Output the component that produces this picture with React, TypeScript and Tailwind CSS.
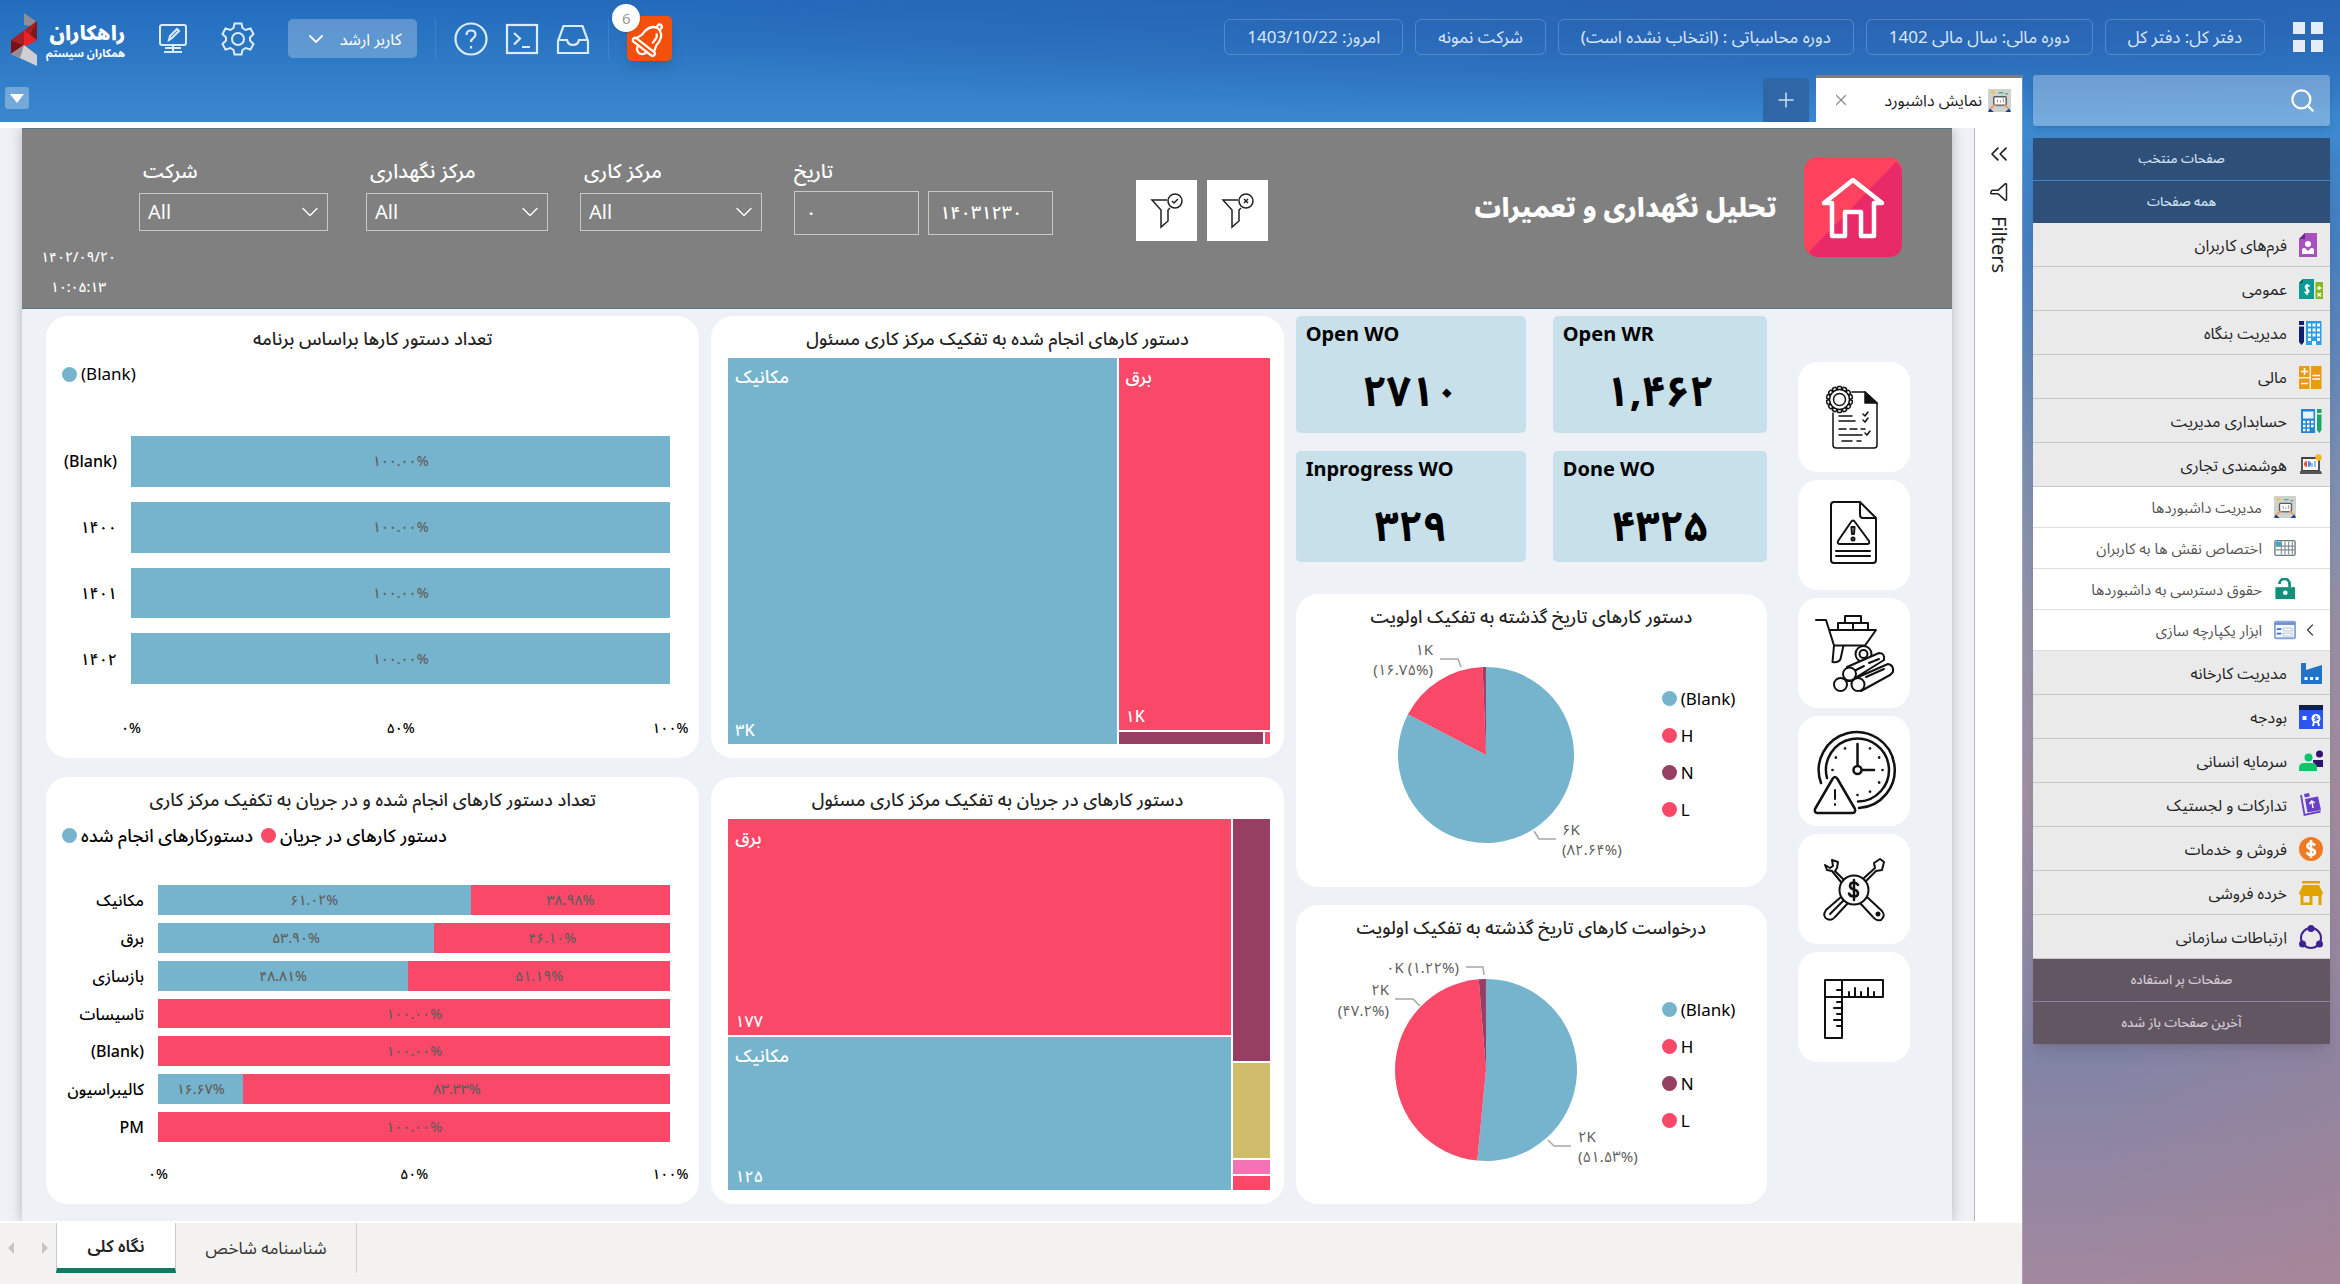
import { type ReactNode } from 'react';
import { ChevronDown, ChevronLeft, ChevronsLeft, Filter, Plus, Search, X } from 'lucide-react';
import { clsx } from 'clsx';

const TEAL = '#76b4cd';
const RED = '#f94868';
const PLUM = '#963f62';

const contextPills = [
  'امروز: 1403/10/22',
  'شرکت نمونه',
  'دوره محاسباتی : (انتخاب نشده است)',
  'دوره مالی: سال مالی 1402',
  'دفتر کل: دفتر کل',
];

interface MenuEntry {
  label: string;
  icon: ReactNode;
  expandable?: boolean;
}

const dashboardGlyph = (
  <>
    <rect width="24" height="24" fill="#cfd3d0" />
    <rect x="6" y="8" width="13" height="9" rx="1" fill="#fff" stroke="#5b5b5b" strokeWidth="1.5" />
    <path d="M9 17.500h7M10 11v3M13 12v2M16 10v4" stroke="#8a8a8a" />
    <path d="M3 2h4v3H3z" fill="#f0c05a" />
    <path d="M11 4h5M18 5h3" stroke="#5aa88a" strokeWidth="1.500" />
    <path d="M0 24l2-4 4 4zM24 24l-2-4-4 4z" fill="#24408e" />
    <path d="M3 20l5-4M21 20l-4-4" stroke="#e59a66" strokeWidth="2" />
  </>
);

const topMenu: MenuEntry[] = [
  {
    label: 'فرم‌های کاربران',
    icon: (
      <>
        <path d="M6 0h12v24H0V6z" fill="#a94fc0" />
        <path d="M6 0v6H0z" fill="#6d2a85" />
        <circle cx="9" cy="11" r="3" fill="#fff" />
        <path d="M3 21v-4q0-2 2-2h1l3 3 3-3h1q2 0 2 2v4z" fill="#fff" />
      </>
    ),
  },
  {
    label: 'عمومی',
    icon: (
      <>
        <path d="M4 2h11v20H0V6z" fill="#0d9a93" />
        <path d="M4 2v4H0z" fill="#075f5b" />
        <path d="M10.500 9.500q-1-1.500-3-1-2 1 0 3.500 3 1 2 3-1.500 1.500-4 0M8 7v11" fill="none" stroke="#fff" strokeWidth="1.600" />
        <rect x="16.500" y="5" width="7.500" height="17" fill="#86b81f" />
        <path d="M18 11h4.500M20.200 9v4M18.500 16l3.500 3.500M22 16l-3.500 3.500" stroke="#fff" strokeWidth="1.400" />
      </>
    ),
  },
  {
    label: 'مدیریت بنگاه',
    icon: (
      <>
        <path d="M0 0h5v4H0zM0 5.500h5V21l-2.500 3L0 21z" fill="#10206f" />
        <path d="M7 0h15.500v24H7z" fill="#2b9fe3" />
        <path d="M9 4h12M9 9h12M9 14h12M9 18.500h3M18 18.500h3" stroke="#fff" strokeWidth="3" strokeDasharray="3 1.500" />
        <path d="M13 20h4v4h-4z" fill="#fff" />
      </>
    ),
  },
  {
    label: 'مالی',
    icon: (
      <>
        <path d="M0 1h10.500v11H0zM0 13.500h10.500V24H0zM12 1h10.500v23H12z" fill="#ea9a17" />
        <path d="M2 6.500h7M5.500 3v7M2 18.500h7M13.500 10.500h7.500M13.500 14h7.500" stroke="#fff" strokeWidth="1.500" />
      </>
    ),
  },
  {
    label: 'حسابداری مدیریت',
    icon: (
      <>
        <path d="M2 0h14v24H2z" fill="#2186d8" />
        <path d="M4 2.500h10.500v7H4z" fill="#e8f2fb" />
        <path d="M4 13h10.500M4 17h10.500M4 21h7" stroke="#fff" strokeWidth="2.500" strokeDasharray="2.500 1.500" />
        <path d="M18 0h4.500v4H18zM18 5.500h4.500V21l-2.200 3-2.300-3z" fill="#17a867" />
      </>
    ),
  },
  {
    label: 'هوشمندی تجاری',
    icon: (
      <>
        <path d="M3 5h17v13H3z" fill="#fff" stroke="#444" strokeWidth="1.800" />
        <path d="M1 18h21l1 3H1z" fill="#555" />
        <path d="M8 8v6a3 3 0 010-6z" fill="#e8503a" />
        <path d="M9 8a3 3 0 010 6z" fill="#3d8fe0" />
        <path d="M13 14v-4M16 14v-6" stroke="#8fb7dc" strokeWidth="1.800" />
        <circle cx="19.500" cy="4.500" r="3.200" fill="#f5b52c" />
      </>
    ),
  },
];

const subMenu: MenuEntry[] = [
  { label: 'مدیریت داشبوردها', icon: dashboardGlyph },
  {
    label: 'اختصاص نقش ها به کاربران',
    icon: (
      <>
        <rect x="1" y="4" width="22" height="16" rx="1.500" fill="#fff" stroke="#6c7a80" strokeWidth="1.500" />
        <path d="M2 5h6v5H2z" fill="#35a4d6" />
        <path d="M8 5v14M12 5v14M16 5v14M20 5v14M2 10h20M2 14h20" stroke="#7f8c92" strokeWidth="1.200" />
      </>
    ),
  },
  {
    label: 'حقوق دسترسی به داشبوردها',
    icon: (
      <>
        <path d="M6 6.500a5.500 5.500 0 0111 0V10" fill="none" stroke="#13907b" strokeWidth="3" />
        <path d="M1.500 10H23v13H1.500z" fill="#13907b" />
        <circle cx="12.300" cy="16" r="2.500" fill="#fff" />
      </>
    ),
  },
  {
    label: 'ابزار یکپارچه سازی',
    expandable: true,
    icon: (
      <>
        <rect x="1" y="3" width="22" height="18" rx="1" fill="#f4f7fc" stroke="#86a5d8" strokeWidth="2" />
        <path d="M1 5h22" stroke="#6f93d0" strokeWidth="3" />
        <path d="M3 11h5M3 16h5" stroke="#3f6fc0" strokeWidth="1.800" />
        <path d="M10 10h10v3H10zM10 15.500h10v3H10z" fill="#fff" stroke="#b9c4d6" />
      </>
    ),
  },
];

const bottomMenu: MenuEntry[] = [
  {
    label: 'مدیریت کارخانه',
    icon: (
      <>
        <path d="M2 2h5v7l16-5v19H2z" fill="#1f73c9" />
        <path d="M5.500 17.500h14" stroke="#fff" strokeWidth="3" strokeDasharray="3 2.500" />
      </>
    ),
  },
  {
    label: 'بودجه',
    icon: (
      <>
        <path d="M0 0h24v24H0z" fill="#2a55f0" />
        <path d="M0 0h24v5H0z" fill="#0f1f52" />
        <path d="M3.500 11h4v4h-4z" fill="#fff" />
        <circle cx="17" cy="13.500" r="4.500" fill="#fff" />
        <path d="M15 17l-1 4M19 17l1 4" stroke="#fff" strokeWidth="2" />
        <path d="M18.500 12q-2.500-1.500-3 .5t3 1.500-3.200 1.500M17 10.500v6" fill="none" stroke="#2a55f0" />
      </>
    ),
  },
  {
    label: 'سرمایه انسانی',
    icon: (
      <>
        <circle cx="20.500" cy="5" r="3.500" fill="#31136f" />
        <path d="M14 11h10v7h-6l-4-5z" fill="#31136f" />
        <circle cx="9.500" cy="8.500" r="4" fill="#0ec56c" />
        <path d="M0 22v-3q0-5 5-5h8q5 0 5 5v3z" fill="#0ec56c" />
      </>
    ),
  },
  {
    label: 'تدارکات و لجستیک',
    icon: (
      <>
        <path d="M2 2l3.500 20 16-3.500" fill="none" stroke="#6a40c9" strokeWidth="1.800" />
        <path d="M5 1l5-1 .800 3.500-5 1zM6 6l13-2.500L22 17 8.500 19.500z" fill="#6a40c9" />
        <path d="M14 15l-1-6M10.500 11l2.300-3 3 2" fill="none" stroke="#fff" strokeWidth="1.500" />
      </>
    ),
  },
  {
    label: 'فروش و خدمات',
    icon: (
      <>
        <circle cx="12" cy="12" r="12" fill="#f07a22" />
        <path d="M16 8.500q-1.500-2.500-4.500-2.200-3.500.700-3 3.200 0 1.700 3.500 2.500t4 3q0 2.700-3.500 3-3.500 0-4.800-2.800M12 3v18" fill="none" stroke="#fff" strokeWidth="2.600" />
      </>
    ),
  },
  {
    label: 'خرده فروشی',
    icon: (
      <>
        <path d="M3 0h18v2.500H3zM4 4h16l4 8q-1 3-4 3H4q-3 0-4-3z" fill="#e0a400" />
        <path d="M3 13v10h9v-9M21 13v11" fill="none" stroke="#e0a400" strokeWidth="3" />
      </>
    ),
  },
  {
    label: 'ارتباطات سازمانی',
    icon: (
      <>
        <circle cx="12" cy="13" r="10" fill="none" stroke="#3f2291" strokeWidth="2" />
        <circle cx="12" cy="3.500" r="3.500" fill="#3f2291" />
        <circle cx="3.500" cy="19" r="3.500" fill="#3f2291" />
        <circle cx="20.500" cy="19" r="3.500" fill="#3f2291" />
      </>
    ),
  },
];

interface BarRow {
  label: string;
  done?: [number, string];
  active?: [number, string];
}

const planRows: BarRow[] = [
  { label: '(Blank)', done: [100, '۱۰۰.۰۰%'] },
  { label: '۱۴۰۰', done: [100, '۱۰۰.۰۰%'] },
  { label: '۱۴۰۱', done: [100, '۱۰۰.۰۰%'] },
  { label: '۱۴۰۲', done: [100, '۱۰۰.۰۰%'] },
];

const centerRows: BarRow[] = [
  { label: 'مکانیک', done: [61.02, '۶۱.۰۲%'], active: [38.98, '۳۸.۹۸%'] },
  { label: 'برق', done: [53.9, '۵۳.۹۰%'], active: [46.1, '۴۶.۱۰%'] },
  { label: 'بازسازی', done: [48.81, '۴۸.۸۱%'], active: [51.19, '۵۱.۱۹%'] },
  { label: 'تاسیسات', active: [100, '۱۰۰.۰۰%'] },
  { label: '(Blank)', active: [100, '۱۰۰.۰۰%'] },
  { label: 'کالیبراسیون', done: [16.67, '۱۶.۶۷%'], active: [83.33, '۸۳.۳۳%'] },
  { label: 'PM', active: [100, '۱۰۰.۰۰%'] },
];

const kpis = [
  { title: 'Open WO', value: '۲۷۱۰' },
  { title: 'Open WR', value: '۱,۴۶۲' },
  { title: 'Inprogress WO', value: '۳۲۹' },
  { title: 'Done WO', value: '۴۳۲۵' },
];

const priorities = [
  { label: '(Blank)', color: 'bg-[#76b4cd]' },
  { label: 'H', color: 'bg-[#f94868]' },
  { label: 'N', color: 'bg-[#963f62]' },
  { label: 'L', color: 'bg-[#f94868]' },
];

const gearTeeth = Array.from({ length: 14 }, (_, i) => (i * 360) / 14);
const clockTicks = [30, 60, 90, 120, 150, 180, 270, 300, 330];

// Each shortcut is drawn on a 112x110 board, the size of its button.
const shortcuts: { name: string; art: ReactNode }[] = [
  {
    name: 'دستور کار',
    art: (
      <g strokeWidth="1.500">
        <path d="M54 30h13l12 11v42q0 3-3 3H38q-3 0-3-3V51" />
        <path d="M67 30v11h12z" fill="#111" />
        {gearTeeth.map((a) => (
          <rect key={a} x="39.500" y="24.500" width="4" height="4" rx="1" transform={`rotate(${a} 41.500 37.500)`} />
        ))}
        <circle cx="41.500" cy="37.500" r="10" fill="#fff" />
        <circle cx="41.500" cy="37.500" r="6" />
        <path d="M41 54h13M41 59h16M41 67h7M52 67h7M63 67h4M41 73h23M44 79h10M59 79h4M65 52l2 2 3-4M65 58l2 2 3-4M67 71l2 2 3-4" />
      </g>
    ),
  },
  {
    name: 'گزارش خرابی',
    art: (
      <g strokeWidth="2">
        <path d="M62 22H36q-3 0-3 3v55q0 3 3 3h39q3 0 3-3V38zM62 22v13q0 3 3 3h13" />
        <path d="M53 42q2-3 4 0l14 19q1 3-2 3H42q-3 0-2-3z" />
        <path d="M53.500 47h3l-.5 7h-2z" />
        <circle cx="55" cy="59" r="1.500" />
        <path d="M38 71h34M38 76h34" />
      </g>
    ),
  },
  {
    name: 'مواد و قطعات',
    art: (
      <g strokeWidth="2">
        <path d="M18 22h10l8 25.500h31L78 32H31M36 47.500L34.500 64q6 1 8-3l3-13.500" />
        <path d="M47 18h16v7H47zM40 25h15v7H40zM55 25h15v7H55z" />
        <circle cx="65.500" cy="56" r="8" />
        <circle cx="65.500" cy="56" r="4" />
        <path d="M49 69l32-14q6 0 5 7L57 80M58 80l32-14q6 1 5 8l-3 3-29 16" fill="#fff" />
        <path d="M56 73l10-5M71 65l10-4M68 79l18-8" />
        <circle cx="51.500" cy="76" r="6.500" fill="#fff" />
        <circle cx="42.500" cy="86.500" r="6.500" fill="#fff" />
        <circle cx="60" cy="86.500" r="6.500" fill="#fff" />
        <path d="M48 83h6" />
      </g>
    ),
  },
  {
    name: 'تاخیرها',
    art: (
      <g strokeWidth="2.500">
        <path d="M23 67a38 38 0 1138 25" />
        <path d="M29 62a31.500 31.500 0 1131 23.500" />
        <path d="M59.500 49V28M64 54h12" />
        <circle cx="59.500" cy="54" r="4" />
        {clockTicks.map((a) => (
          <circle key={a} cx="59.500" cy="29" r=".600" strokeWidth="1.500" transform={`rotate(${a} 59.500 54)`} />
        ))}
        <path d="M34.500 63q2.500-4 5 0L57 93q1 4-3 4H20q-4 0-3-4z" fill="#fff" />
        <path d="M37 74v9M37 88v1" strokeWidth="2" />
      </g>
    ),
  },
  {
    name: 'هزینه تعمیرات',
    art: (
      <g strokeWidth="2">
        <path d="M43 48L34 37l-5-1-2-5 5 3 3-2-1-6 6 2-1 6-2 3 9 9M66 44l11-10-1-5 6-4 4 3-2 8-6 1-10 10" />
        <path d="M43 63L28 76q-4 6 1 9 5 2 8-2l13-14M46 66L32 80M69 63l15 14q4 5-1 9-5 1-8-3L62 69" />
        <circle cx="80" cy="80" r="1.500" fill="#111" />
        <circle cx="56" cy="56" r="14.500" fill="#fff" />
        <path d="M60 51q-2-3-5-2.500t-3 3.500q0 2.500 4 3.500t4 4q0 3-4 3t-5-3M56 46v20" strokeWidth="2.500" />
      </g>
    ),
  },
  {
    name: 'اندازه گیری',
    art: (
      <g strokeWidth="2">
        <path d="M27 28h58v17H27M27 28v58h17V28" />
        <path d="M44 38h-5M44 50h-5M44 56h-8M44 62h-5M44 68h-8M44 74h-5M51 45v-5M57 45v-9M63 45v-5M70 45v-9M76 45v-5" />
      </g>
    ),
  },
];

function MenuItem({ entry, nested }: { entry: MenuEntry; nested?: boolean }) {
  return (
    <li className={clsx('border-b', nested ? 'h-[41px] border-[#dedede] bg-white pr-[34px]' : 'h-11 border-[#c6c6c6] bg-[#eaeaea] pr-[7px]')}>
      <a href="#" className={clsx('relative flex h-full items-center gap-3', nested ? 'text-[15px] text-[#555]' : 'text-base text-[#222]')}>
        {entry.expandable && <ChevronLeft className="absolute -right-6 size-5 text-[#444]" strokeWidth={1.5} />}
        <svg viewBox="0 0 24 24" className={nested ? 'size-[22px]' : 'size-6'}>{entry.icon}</svg>
        {entry.label}
      </a>
    </li>
  );
}

function SideHeading({ children, tone }: { children: ReactNode; tone: 'blue' | 'plum' }) {
  return (
    <button className={clsx('block h-[42px] w-full text-center text-[13px] font-medium', tone === 'blue' ? 'bg-[#2e4f78] text-[#cfe0f2]' : 'bg-[#625663] text-[#d3ccd4]')}>
      {children}
    </button>
  );
}

function Card({ title, className, children }: { title: string; className?: string; children: ReactNode }) {
  return (
    <section className={clsx('flex flex-col rounded-[22px] bg-white', className)}>
      <h2 dir="rtl" className="pt-2 text-center text-lg leading-7 font-medium text-[#252423]">{title}</h2>
      {children}
    </section>
  );
}

function StackedBars({ rows, compact }: { rows: BarRow[]; compact?: boolean }) {
  return (
    <div className="flex flex-1 flex-col pr-[29px] pb-5">
      <ul className={clsx('flex flex-1 flex-col', compact ? 'gap-2' : 'gap-[15px]')}>
        {rows.map((row) => (
          <li key={row.label} className="flex flex-1 items-stretch gap-[14px] text-sm font-medium">
            <span className={clsx('flex items-center justify-end text-base whitespace-nowrap text-black', compact ? 'w-[98px]' : 'w-[71px]')}>{row.label}</span>
            <div className="flex flex-1 text-[#605e5c]">
              {row.done && (
                <div className="flex items-center justify-center bg-[#76b4cd]" style={{ width: `${row.done[0]}%` }}>{row.done[1]}</div>
              )}
              {row.active && (
                <div className="flex items-center justify-center bg-[#f94868]" style={{ width: `${row.active[0]}%` }}>{row.active[1]}</div>
              )}
            </div>
          </li>
        ))}
      </ul>
      <div className={clsx('-mr-5 flex justify-between text-center text-sm leading-5 font-medium text-black', compact ? 'pt-[22px] pl-[92px]' : 'pt-[34px] pl-[65px]')}>
        <span className="w-10">۰%</span>
        <span className="w-10">۵۰%</span>
        <span className="w-10">۱۰۰%</span>
      </div>
    </div>
  );
}

function LegendDot({ color, label }: { color: string; label: string }) {
  return (
    <li className="flex items-center gap-1">
      <span className={clsx('size-[15px] rounded-full', color)} />
      {label}
    </li>
  );
}

function Tile({ name, value, className }: { name: string; value: string; className: string }) {
  return (
    <div className={clsx('flex flex-col justify-between px-[7px] py-1 text-lg leading-7 font-medium text-white', className)}>
      <span>{name}</span>
      <span className="text-base leading-5">{value}</span>
    </div>
  );
}

function point(cx: number, cy: number, r: number, share: number) {
  const a = share * 2 * Math.PI;
  return `${cx + r * Math.sin(a)} ${cy - r * Math.cos(a)}`;
}

interface PieProps {
  cy: number;
  r: number;
  blank: number;
  high: number;
  children: ReactNode;
}

function PriorityPie({ cy, r, blank, high, children }: PieProps) {
  const cx = 190;
  const slice = (from: number, to: number) =>
    `M${cx} ${cy}L${point(cx, cy, r, from)}A${r} ${r} 0 ${to - from > 0.5 ? 1 : 0} 1 ${point(cx, cy, r, to)}Z`;
  return (
    <div className="flex flex-1 items-start">
      <svg viewBox="0 0 366 256" className="h-64 w-[366px] shrink-0" fill="none" stroke="#a6a6a6" strokeWidth="1.500">
        <g stroke="none">
          <path d={slice(0, blank)} fill={TEAL} />
          <path d={slice(blank, blank + high)} fill={RED} />
          <path d={slice(blank + high, 0.9999)} fill={PLUM} />
        </g>
        {children}
      </svg>
      <ul className="flex flex-col gap-3 pt-14 text-[17px] leading-[25px] text-black">
        {priorities.map((p) => <LegendDot key={p.label} color={p.color} label={p.label} />)}
      </ul>
    </div>
  );
}

function Slicer({ id, label, className }: { id: string; label: string; className: string }) {
  return (
    <div className={className}>
      <label htmlFor={id} className="block px-1 text-xl leading-7 font-medium text-white">{label}</label>
      <div className="relative mt-2 flex items-center">
        <select id={id} className="h-[38px] w-full appearance-none border border-[#c8c8c8] bg-transparent px-2 text-xl text-white">
          <option>All</option>
        </select>
        <ChevronDown className="pointer-events-none absolute right-1 size-7 text-white" strokeWidth={1.2} />
      </div>
    </div>
  );
}

function FunnelButton({ label, mark }: { label: string; mark: string }) {
  return (
    <button aria-label={label} className="flex size-[61px] items-center justify-center bg-white">
      <svg viewBox="0 0 34 36" className="h-9 w-[34px]" fill="none" stroke="#222" strokeWidth="1.500">
        <path d="M17 7H2l9 10v17l7-6V17l2-2" />
        <circle cx="25" cy="8" r="7" />
        <path d={mark} />
      </svg>
    </button>
  );
}

function Header() {
  return (
    <header className="flex h-[75px] items-start justify-between pr-[17px] pl-2">
      <div className="flex h-[75px] items-start gap-[33px] pt-[19px] text-[#dcebfa]">
        <div className="flex gap-2">
          <svg viewBox="0 0 30 54" className="-mt-[6px] h-[54px] w-[30px]">
            <path d="M16 0l13 9v5L16 12z" fill="#8f8f93" />
            <path d="M29 8v19L16 18z" fill="#7d1a1d" />
            <path d="M29 8L3 27l13 7z" fill="#a91f24" />
            <path d="M16 17l13 10-13 7z" fill="#ea2227" />
            <path d="M3 27v14l13-8z" fill="#7d1016" />
            <path d="M16 32L3 41l26 12V42z" fill="#cfcfd3" />
            <path d="M16 32l-4 13-9-4z" fill="#8f8f93" />
          </svg>
          <div dir="rtl" className="flex flex-col text-white">
            <span className="text-xl leading-7 font-black">راهکاران</span>
            <span className="text-[11px] leading-3 font-bold">همکاران سیستم</span>
          </div>
        </div>
        <button aria-label="نمایش">
          <svg viewBox="0 0 30 40" className="h-10 w-[30px]" fill="none" stroke="currentColor" strokeWidth="2">
            <rect x="2" y="6" width="26" height="20" rx="2" />
            <path d="M15 26v6M7 29h16M6 33h18M11 21l1-4 7-7 2 2-7 7z" />
          </svg>
        </button>
        <button aria-label="تنظیمات">
          <svg viewBox="0 0 34 40" className="h-10 w-[34px]" fill="none" stroke="currentColor" strokeWidth="2">
            <path d="M13.500 4.500h7l1 4.500 3 2 5-1.500 3 5.500-3.500 3.500v3l3.500 3.500-3 5.500-5-1.500-3 2-1 4.500h-7l-1-4.500-3-2-5 1.500-3-5.500L5 21.500v-3L1.500 15l3-5.500 5 1.500 3-2z" />
            <circle cx="17" cy="20" r="6" />
          </svg>
        </button>
        <div className="flex items-start gap-[18px] text-[#dcebfa]">
          <button dir="rtl" className="flex h-[39px] w-[129px] items-center justify-center gap-3 rounded-[5px] bg-white/25 text-base text-white">
            کاربر ارشد
            <ChevronDown className="size-6" strokeWidth={1.8} />
          </button>
          <span className="h-10 w-px bg-white/10" />
          <div className="flex gap-[17px]">
            <button aria-label="راهنما">
              <svg viewBox="0 0 34 40" className="h-10 w-[34px]" fill="none" stroke="currentColor" strokeWidth="2.200">
                <circle cx="17" cy="20" r="15.500" />
                <path d="M12.500 16q0-4.500 4.500-4.500t4.500 4q0 2-2.500 3.800-2 1.400-2 3.700M17 27v2.500" />
              </svg>
            </button>
            <button aria-label="فرمان">
              <svg viewBox="0 0 34 40" className="h-10 w-[34px]" fill="none" stroke="currentColor" strokeWidth="2.200">
                <rect x="2" y="6" width="30" height="28" />
                <path d="M9 14l6 5.500-6 6M17 28h8" />
              </svg>
            </button>
            <button aria-label="صندوق">
              <svg viewBox="0 0 34 40" className="h-10 w-[34px]" fill="none" stroke="currentColor" strokeWidth="2.200">
                <path d="M2 22L7.500 7h19L32 22v12H2zM2 21h9q1 5 6 5t6-5h9" />
              </svg>
            </button>
          </div>
          <span className="h-10 w-px bg-white/10" />
          <button aria-label="اعلان‌ها" className="relative -mt-[3px] flex size-[45px] items-center justify-center rounded-[5px] bg-[#f4500b] text-white shadow-lg">
            <svg viewBox="0 0 36 36" className="size-10" fill="none" stroke="currentColor" strokeWidth="2" strokeLinejoin="round" strokeLinecap="round">
              <g transform="rotate(38 18 18)">
                <path d="M8 25l2-6v-4q1-8 8-9 7 1 8 9v4l2 6" />
                <path d="M7 25h22q2 2 0 4H7q-2-2 0-4z" />
                <path d="M13 29q1 5 5 5t5-5M16 6V3q2-2 4 0v3M20 11q2 1 2 5v3" />
              </g>
            </svg>
            <span className="absolute -top-3 -left-[15px] flex size-7 items-center justify-center rounded-full bg-white text-[15px] text-[#999] shadow">6</span>
          </button>
        </div>
      </div>
      <div className="flex items-center gap-3 pt-[19px]">
        {contextPills.map((pill) => (
          <button key={pill} dir="rtl" className="h-9 rounded-md border border-white/20 px-[22px] text-[17px] whitespace-nowrap text-[#dbe8f7]">{pill}</button>
        ))}
        <button aria-label="برنامه‌ها" className="ml-4 grid grid-cols-2 gap-[6px]">
          {[0, 1, 2, 3].map((n) => <span key={n} className="size-3 bg-[#e3ecf7]" />)}
        </button>
      </div>
    </header>
  );
}

function ReportBanner() {
  return (
    <div className="flex h-[181px] items-start border-y border-[#57788a] bg-[#808080] pr-[50px] text-white">
      <div className="flex w-[117px] flex-col items-center pt-[113px] pr-1 text-sm leading-[30px] font-medium">
        <span>۱۴۰۲/۰۹/۲۰</span>
        <span>۱۰:۰۵:۱۳</span>
      </div>
      <div className="flex gap-8 pt-7">
        <Slicer id="company" label="شرکت" className="mr-[6px] w-[189px]" />
        <Slicer id="upkeep" label="مرکز نگهداری" className="w-[182px]" />
        <Slicer id="workshop" label="مرکز کاری" className="w-[182px]" />
        <div>
          <label htmlFor="date-from" className="block text-xl leading-7 font-medium">تاریخ</label>
          <div className="mt-[6px] flex gap-[9px]">
            <input id="date-from" defaultValue="۰" className="h-11 w-[125px] border border-[#c8c8c8] bg-transparent px-[11px] text-lg font-medium" />
            <input aria-label="تا تاریخ" defaultValue="۱۴۰۳۱۲۳۰" className="h-11 w-[125px] border border-[#c8c8c8] bg-transparent px-[11px] text-lg font-medium" />
          </div>
        </div>
      </div>
      <div className="flex gap-[10px] pt-[51px] pl-[83px]">
        <FunnelButton label="اعمال فیلتر" mark="M22 8l2 2 4-4" />
        <FunnelButton label="حذف فیلتر" mark="M23 6l4 4M27 6l-4 4" />
      </div>
      <div className="flex flex-1 items-center justify-end gap-[27px] pt-7">
        <h1 dir="rtl" className="text-[26px] font-black whitespace-nowrap">تحلیل نگهداری و تعمیرات</h1>
        <a href="#" aria-label="خانه">
          <svg viewBox="0 0 98 100" className="h-[100px] w-[98px]">
            <rect width="98" height="100" rx="14" fill="#ff425d" />
            <path d="M92 5q6 4 6 12v69q0 14-14 14H14q-6 0-9-5z" fill="#e92a68" />
            <path d="M49 23L20 46h8v33h13V55h16v24h13V46h8z" fill="none" stroke="#fff" strokeWidth="4.500" strokeLinejoin="round" />
          </svg>
        </a>
      </div>
    </div>
  );
}

function ReportPage() {
  return (
    <div className="flex flex-1 flex-col bg-[#eef1f6] shadow-[0_0_12px_rgba(0,0,0,0.25)]">
      <ReportBanner />
      <div className="grid flex-1 grid-cols-[653fr_572fr_471fr_131fr] gap-3 pt-[7px] pr-[42px] pb-[17px] pl-6">
        <div className="flex flex-col gap-[19px]">
          <Card title="تعداد دستور کارها براساس برنامه" className="flex-[442]">
            <ul className="flex pt-2 pb-12 pl-4 text-[17px] leading-7 text-black">
              <LegendDot color="bg-[#76b4cd]" label="(Blank)" />
            </ul>
            <StackedBars rows={planRows} />
          </Card>
          <Card title="تعداد دستور کارهای انجام شده و در جریان به تکفیک مرکز کاری" className="flex-[427]">
            <ul className="flex gap-2 pt-2 pb-9 pl-4 text-lg leading-7 font-medium text-black">
              <LegendDot color="bg-[#76b4cd]" label="دستورکارهای انجام شده" />
              <LegendDot color="bg-[#f94868]" label="دستور کارهای در جریان" />
            </ul>
            <StackedBars rows={centerRows} compact />
          </Card>
        </div>

        <div className="flex flex-col gap-[19px]">
          <Card title="دستور کارهای انجام شده به تفکیک مرکز کاری مسئول" className="flex-[442]">
            <div className="flex flex-1 gap-[2px] pt-[6px] pr-[14px] pb-[14px] pl-[17px]">
              <Tile name="مکانیک" value="۳K" className="flex-[374] bg-[#76b4cd]" />
              <div className="flex flex-[151] flex-col gap-[2px]">
                <Tile name="برق" value="۱K" className="flex-1 bg-[#f94868]" />
                <div className="flex h-3 gap-[2px]">
                  <div className="flex-1 bg-[#963f62]" />
                  <div className="w-[5px] bg-[#f94868]" />
                </div>
              </div>
            </div>
          </Card>
          <Card title="دستور کارهای در جریان به تفکیک مرکز کاری مسئول" className="flex-[427]">
            <div className="flex flex-1 gap-[2px] pt-[6px] pr-[14px] pb-[14px] pl-[17px]">
              <div className="flex flex-[503] flex-col gap-[2px]">
                <Tile name="برق" value="۱۷۷" className="flex-[209] bg-[#f94868]" />
                <Tile name="مکانیک" value="۱۲۵" className="flex-[146] bg-[#76b4cd]" />
              </div>
              <div className="flex flex-[37] flex-col gap-[2px]">
                <div className="flex-[243] bg-[#963f62]" />
                <div className="flex-[95] bg-[#cfbd6b]" />
                <div className="flex-[14] bg-[#f472b6]" />
                <div className="flex-[14] bg-[#f94868]" />
              </div>
            </div>
          </Card>
        </div>

        <div className="flex flex-col">
          <dl className="grid flex-[247] grid-cols-[230fr_214fr] grid-rows-[117fr_112fr] gap-x-[27px] gap-y-[18px]">
            {kpis.map((kpi) => (
              <div key={kpi.title} className="flex flex-col rounded-[5px] bg-[#c8e0ea] px-[10px] pt-1 text-black">
                <dt className="font-['Noto_Sans',sans-serif] text-xl leading-7 font-bold">{kpi.title}</dt>
                <dd className="pt-3 text-center text-[42px] leading-[60px] font-bold">{kpi.value}</dd>
              </div>
            ))}
          </dl>
          <Card title="دستور کارهای تاریخ گذشته به تفکیک اولویت" className="mt-8 flex-[293]">
            <PriorityPie cy={125} r={88} blank={0.8264} high={0.1675}>
              <path d="M144 29h18l3 8M238 201l5 8h17" />
              <g stroke="none" fill="#605e5c" fontSize="15">
                <text x="137" y="25" textAnchor="end">۱K</text>
                <text x="137" y="45" textAnchor="end">(۱۶.۷۵%)</text>
                <text x="266" y="205">۶K</text>
                <text x="266" y="225">(۸۲.۶۴%)</text>
              </g>
            </PriorityPie>
          </Card>
          <Card title="درخواست کارهای تاریخ گذشته به تفکیک اولویت" className="mt-[18px] flex-[300]">
            <PriorityPie cy={129} r={91} blank={0.5153} high={0.472}>
              <path d="M170 26h17l1 8M99 58h18l7 7M252 199l6 6h17" />
              <g stroke="none" fill="#605e5c" fontSize="15">
                <text x="163" y="32" textAnchor="end">۰K (۱.۲۲%)</text>
                <text x="93" y="54" textAnchor="end">۲K</text>
                <text x="93" y="75" textAnchor="end">(۴۷.۲%)</text>
                <text x="282" y="201">۲K</text>
                <text x="282" y="221">(۵۱.۵۳%)</text>
              </g>
            </PriorityPie>
          </Card>
        </div>

        <nav className="flex flex-col items-end gap-2 pt-[46px]">
          {shortcuts.map((s) => (
            <button key={s.name} aria-label={s.name} className="rounded-[20px] bg-white">
              <svg viewBox="0 0 112 110" className="h-[110px] w-28" fill="none" stroke="#111" strokeLinecap="round" strokeLinejoin="round">{s.art}</svg>
            </button>
          ))}
        </nav>
      </div>
    </div>
  );
}

export default function App() {
  return (
    <div className="flex min-h-screen flex-col bg-[radial-gradient(ellipse_1500px_120px_at_80%_0%,#2a62b2_0%,#2a62b200_100%),linear-gradient(180deg,#226cbd_0px,#3c89cf_128px,#457fc0_240px,#7f8fb0_480px,#9592a8_640px,#a08ea4_800px,#8284a6_1060px,#a2889f_1284px)] font-['Noto_Sans','Noto_Sans_Arabic','DejaVu_Sans',sans-serif]">
      <Header />
      <div className="flex flex-1">
        <main className="flex flex-1 flex-col">
          <div className="flex h-[47px] items-end justify-between">
            <button aria-label="فهرست زبانه‌ها" className="mb-[13px] ml-[5px] flex h-[22px] w-6 items-center justify-center rounded-[3px] bg-white/30">
              <svg viewBox="0 0 14 9" className="h-[9px] w-[14px]"><path d="M0 0h14L7 9z" fill="#fff" /></svg>
            </button>
            <div className="flex items-end gap-[7px]">
              <button aria-label="زبانه جدید" className="flex h-11 w-[46px] items-center justify-center rounded-t bg-[#2f66a6] text-[#cfe0f2]">
                <Plus className="size-6" strokeWidth={1.5} />
              </button>
              <div dir="rtl" className="flex h-[47px] w-[206px] items-center justify-between border-t-[3px] border-[#7d7d7d] bg-white pr-[11px] pl-4">
                <a href="#" className="flex items-center gap-[6px] text-base text-[#222]">
                  <svg viewBox="0 0 24 24" className="size-[23px]">{dashboardGlyph}</svg>
                  نمایش داشبورد
                </a>
                <button aria-label="بستن">
                  <X className="size-[18px] text-[#888]" strokeWidth={1.5} />
                </button>
              </div>
            </div>
          </div>
          <div className="h-[6px] bg-white" />
          <div className="flex flex-1 overflow-hidden bg-[#eef1f6] pl-[22px]">
            <ReportPage />
            <aside className="ml-[22px] flex w-12 flex-col items-center gap-[14px] border-l border-[#b8b8b8] bg-white pt-3 text-[#222]">
              <button aria-label="باز کردن فیلترها"><ChevronsLeft className="size-7" strokeWidth={1.5} /></button>
              <Filter className="size-5 rotate-90" strokeWidth={1.8} />
              <span className="text-xl [writing-mode:vertical-rl]">Filters</span>
            </aside>
          </div>
          <div className="flex h-[63px] items-start border-t-2 border-white bg-[#f3f2f1] text-[17px]">
            <div className="flex h-[50px] w-14 items-center justify-between px-2">
              <button aria-label="قبلی"><svg viewBox="0 0 6 12" className="h-3 w-[6px]"><path d="M6 0v12L0 6z" fill="#c4c4c4" /></svg></button>
              <button aria-label="بعدی"><svg viewBox="0 0 6 12" className="h-3 w-[6px]"><path d="M0 0v12l6-6z" fill="#c4c4c4" /></svg></button>
            </div>
            <button className="h-[50px] w-[120px] border-x border-b-[5px] border-x-[#c8c8c8] border-b-[#117865] bg-white font-semibold text-[#222]">نگاه کلی</button>
            <button className="h-[50px] w-[181px] border-r border-[#d0d0d0] text-[#333]">شناسنامه شاخص</button>
          </div>
        </main>

        <aside dir="rtl" className="w-[318px] border-l border-white/20 bg-[linear-gradient(100deg,transparent_40%,#b0828c55_100%)] bg-[length:100%_700px] bg-bottom bg-no-repeat px-[10px]">
          <div className="relative flex items-center">
            <input type="search" aria-label="جستجو" className="h-[51px] w-full rounded-[3px] bg-white/30 pr-12 text-white shadow-md" />
            <Search className="absolute right-[14px] size-[27px] text-white" strokeWidth={2} />
          </div>
          <nav className="mt-3 shadow-lg">
            <div className="flex flex-col gap-px">
              <SideHeading tone="blue">صفحات منتخب</SideHeading>
              <SideHeading tone="blue">همه صفحات</SideHeading>
            </div>
            <ul>
              {topMenu.map((entry) => <MenuItem key={entry.label} entry={entry} />)}
              {subMenu.map((entry) => <MenuItem key={entry.label} entry={entry} nested />)}
              {bottomMenu.map((entry) => <MenuItem key={entry.label} entry={entry} />)}
            </ul>
            <div className="flex flex-col gap-px">
              <SideHeading tone="plum">صفحات پر استفاده</SideHeading>
              <SideHeading tone="plum">آخرین صفحات باز شده</SideHeading>
            </div>
          </nav>
        </aside>
      </div>
    </div>
  );
}
